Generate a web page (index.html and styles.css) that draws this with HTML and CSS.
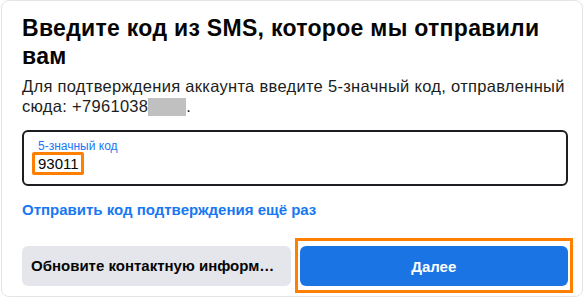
FILE: index.html
```html
<!DOCTYPE html>
<html lang="ru">
<head>
    <meta charset="UTF-8">
    <meta name="viewport" content="width=device-width, initial-scale=1.0">
    <title>Подтверждение аккаунта</title>
    <link rel="stylesheet" href="styles.css">
</head>
<body>
    <div class="card">
        <h1 class="title">Введите код из SMS, которое мы отправили вам</h1>
        <p class="desc">Для подтверждения аккаунта введите 5-значный код, отправленный сюда: +7961038<span class="hidden-digits"></span>.</p>
        <div class="code-field">
            <div class="code-label">5-значный код</div>
            <div class="code-value"><span class="code-mark">93011</span></div>
        </div>
        <a class="resend" href="#">Отправить код подтверждения ещё раз</a>
        <div class="actions">
            <div class="btn btn-gray">Обновите контактную информацию</div>
            <div class="btn btn-blue">Далее</div>
        </div>
    </div>
</body>
</html>
```

FILE: styles.css
```css
body {
    margin: 0;
    background: #ffffff;
    font-family: 'Liberation Sans', Arial, Helvetica, sans-serif;
    color: #1c1e21;
}

.card {
    box-sizing: border-box;
    width: 582px;
    height: 297px;
    margin-left: 1px;
    padding: 13px 14px 0 20px;
    border: 1px solid #e2e4e8;
    border-radius: 8px;
    background: #ffffff;
}

.title {
    margin: 0;
    font-size: 23px;
    line-height: 28px;
    letter-spacing: 0.3px;
    font-weight: bold;
    color: #050505;
}

.desc {
    margin: 6px 0 0;
    font-size: 16.5px;
    line-height: 20px;
    letter-spacing: 0.3px;
}

.hidden-digits {
    display: inline-block;
    width: 38px;
    height: 18px;
    vertical-align: -4px;
    background: #c0c0c0;
}

.code-field {
    margin-top: 14px;
    padding: 6px 14px 10px;
    border: 2px solid #1c1e21;
    border-radius: 6px;
}

.code-label {
    font-size: 12px;
    line-height: 16px;
    color: #1877f2;
}

.code-value {
    font-size: 15px;
    line-height: 20px;
    color: #050505;
}

.code-mark {
    margin-left: -6px;
    padding: 0 2px 0 3px;
    border: 3px solid #ff7f00;
    border-radius: 2px;
}

.resend {
    display: block;
    margin-top: 14px;
    font-size: 15px;
    line-height: 20px;
    font-weight: bold;
    color: #1877f2;
    text-decoration: none;
}

.actions {
    display: grid;
    grid-template-columns: 1fr 1fr;
    gap: 9px;
    margin-top: 26px;
}

.btn {
    min-width: 0;
    height: 40px;
    border-radius: 6px;
    display: flex;
    align-items: center;
    justify-content: center;
    font-size: 15px;
    font-weight: bold;
}

.btn-gray {
    display: block;
    line-height: 40px;
    padding: 0 9px;
    background: #e4e6eb;
    color: #050505;
    white-space: nowrap;
    overflow: hidden;
    text-overflow: ellipsis;
}

.btn-blue {
    position: relative;
    background: #1b74e4;
    color: #ffffff;
}

.btn-blue::after {
    content: "";
    position: absolute;
    top: -8px;
    left: -5px;
    right: -5px;
    bottom: -7px;
    border: 3px solid #ff7f00;
}
```
